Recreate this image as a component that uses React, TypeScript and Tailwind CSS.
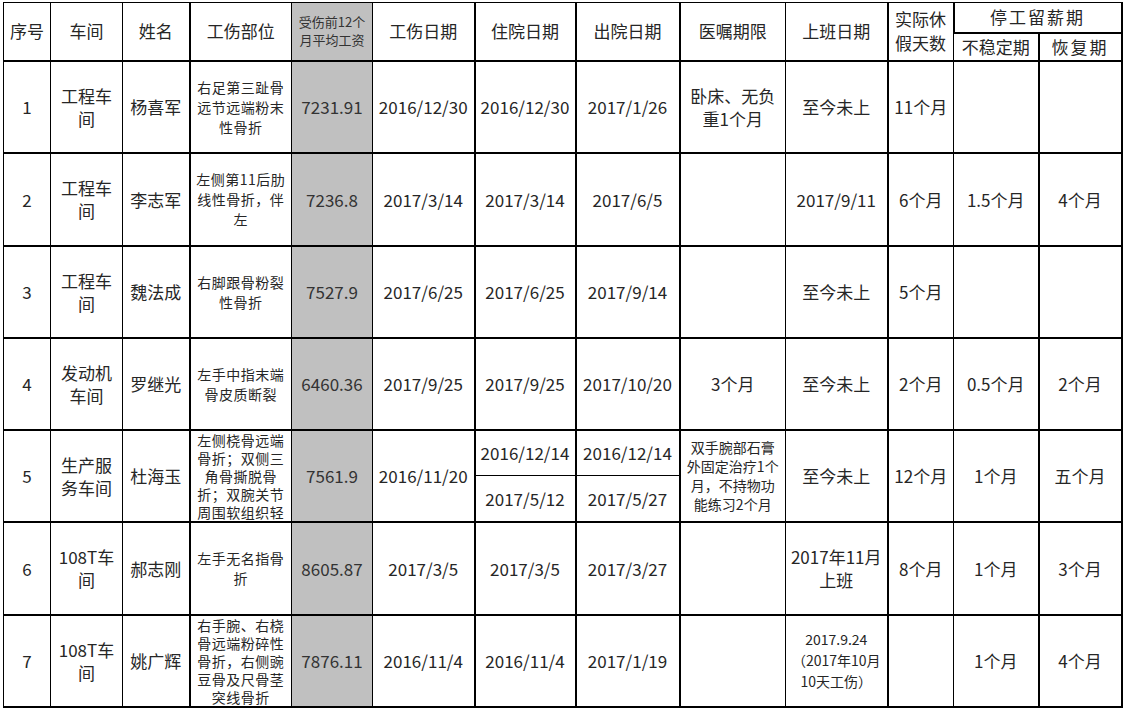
import React from 'react';

type Rec = {
  no: string;
  ws: string[];
  name: string;
  part: string[];
  wage: string;
  inj: string;
  adm: string[];
  dis: string[];
  order: string[];
  orderSmall?: boolean;
  back: string[];
  backSmall?: boolean;
  rest: string;
  unstable: string;
  recover: string;
  h: string;
};

const recs: Rec[] = [
  {
    no: '1', ws: ['工程车', '间'], name: '杨喜军', part: ['右足第三趾骨', '远节远端粉末', '性骨折'],
    wage: '7231.91', inj: '2016/12/30', adm: ['2016/12/30'], dis: ['2017/1/26'],
    order: ['卧床、无负', '重1个月'], back: ['至今未上'], rest: '11个月', unstable: '', recover: '', h: 'h-[92px]',
  },
  {
    no: '2', ws: ['工程车', '间'], name: '李志军', part: ['左侧第11后肋', '线性骨折，伴', '左'],
    wage: '7236.8', inj: '2017/3/14', adm: ['2017/3/14'], dis: ['2017/6/5'],
    order: [], back: ['2017/9/11'], rest: '6个月', unstable: '1.5个月', recover: '4个月', h: 'h-[93px]',
  },
  {
    no: '3', ws: ['工程车', '间'], name: '魏法成', part: ['右脚跟骨粉裂', '性骨折'],
    wage: '7527.9', inj: '2017/6/25', adm: ['2017/6/25'], dis: ['2017/9/14'],
    order: [], back: ['至今未上'], rest: '5个月', unstable: '', recover: '', h: 'h-[92px]',
  },
  {
    no: '4', ws: ['发动机', '车间'], name: '罗继光', part: ['左手中指末端', '骨皮质断裂'],
    wage: '6460.36', inj: '2017/9/25', adm: ['2017/9/25'], dis: ['2017/10/20'],
    order: ['3个月'], back: ['至今未上'], rest: '2个月', unstable: '0.5个月', recover: '2个月', h: 'h-[92px]',
  },
  {
    no: '5', ws: ['生产服', '务车间'], name: '杜海玉',
    part: ['左侧桡骨远端', '骨折；双侧三', '角骨撕脱骨', '折；双腕关节', '周围软组织轻'],
    wage: '7561.9', inj: '2016/11/20', adm: ['2016/12/14', '2017/5/12'], dis: ['2016/12/14', '2017/5/27'],
    order: ['双手腕部石膏', '外固定治疗1个', '月，不持物功', '能练习2个月'], orderSmall: true,
    back: ['至今未上'], rest: '12个月', unstable: '1个月', recover: '五个月', h: 'h-[46px]',
  },
  {
    no: '6', ws: ['108T车', '间'], name: '郝志刚', part: ['左手无名指骨', '折'],
    wage: '8605.87', inj: '2017/3/5', adm: ['2017/3/5'], dis: ['2017/3/27'],
    order: [], back: ['2017年11月', '上班'], rest: '8个月', unstable: '1个月', recover: '3个月', h: 'h-[93px]',
  },
  {
    no: '7', ws: ['108T车', '间'], name: '姚广辉',
    part: ['右手腕、右桡', '骨远端粉碎性', '骨折，右侧豌', '豆骨及尺骨茎', '突线骨折'],
    wage: '7876.11', inj: '2016/11/4', adm: ['2016/11/4'], dis: ['2017/1/19'],
    order: [], back: ['2017.9.24', '（2017年10月', '10天工伤）'], backSmall: true,
    rest: '', unstable: '1个月', recover: '4个月', h: 'h-[92px]',
  },
];

// border per column, matching the thin / thick rules of the sheet
const col = [
  'border border-black',
  'border border-black',
  'border border-black',
  'border border-black border-l-2',
  'border border-black bg-[#c0c0c0]',
  'border border-black',
  'border border-black border-l-2',
  'border border-black border-l-2',
  'border border-black border-l-2',
  'border border-black',
  'border border-black border-l-2',
  'border border-black',
  'border border-black border-l-2 border-r-2',
];

function Lines({ lines }: { lines: string[] }) {
  return (
    <>
      {lines.map((l) => (
        <div key={l} className="whitespace-nowrap">
          {l}
        </div>
      ))}
    </>
  );
}

function Record({ r, last }: { r: Rec; last: boolean }) {
  const split = r.adm.length > 1;
  const rs = split ? 2 : 1;
  const top = `border-t-2 p-0 align-middle ${last ? 'border-b-2' : ''}`;
  const big = 'text-[17px] leading-[23px]';
  const partLead = r.part.length > 3 ? 'text-[14px] leading-[18px]' : 'text-[14px] leading-[20px]';
  return (
    <>
      <tr className={r.h}>
        <td rowSpan={rs} className={`${col[0]} ${top} ${big}`}>{r.no}</td>
        <td rowSpan={rs} className={`${col[1]} ${top} ${big}`}><Lines lines={r.ws} /></td>
        <td rowSpan={rs} className={`${col[2]} ${top} ${big}`}>{r.name}</td>
        <td rowSpan={rs} className={`${col[3]} ${top} ${partLead} tracking-[0.5px]`}>
          <Lines lines={r.part} />
        </td>
        <td rowSpan={rs} className={`${col[4]} ${top} ${big} text-[#333]`}>{r.wage}</td>
        <td rowSpan={rs} className={`${col[5]} ${top} ${big}`}>{r.inj}</td>
        <td className={`${col[6]} ${top} ${big}`}>{r.adm[0]}</td>
        <td className={`${col[7]} ${top} ${big}`}>{r.dis[0]}</td>
        <td rowSpan={rs} className={`${col[8]} ${top} ${r.orderSmall ? 'text-[14px] leading-[19px]' : big}`}>
          <Lines lines={r.order} />
        </td>
        <td rowSpan={rs} className={`${col[9]} ${top} ${r.backSmall ? 'text-[14px] leading-[21px]' : big}`}>
          <Lines lines={r.back} />
        </td>
        <td rowSpan={rs} className={`${col[10]} ${top} ${big}`}>{r.rest}</td>
        <td rowSpan={rs} className={`${col[11]} ${top} ${big}`}>{r.unstable}</td>
        <td rowSpan={rs} className={`${col[12]} ${top} ${big}`}>{r.recover}</td>
      </tr>
      {split && (
        <tr className="h-[46px]">
          <td className={`${col[6]} p-0 align-middle ${big}`}>{r.adm[1]}</td>
          <td className={`${col[7]} p-0 align-middle ${big}`}>{r.dis[1]}</td>
        </tr>
      )}
    </>
  );
}

export default function App() {
  const th = 'p-0 align-middle font-normal text-[17px] leading-[26px]';
  return (
    <div className="min-h-screen bg-white pl-[3px] pt-[2px] font-['Noto_Sans_CJK_SC',sans-serif] text-[#262626]">
      <table className="w-[1118px] table-fixed border-collapse text-center">
        <colgroup>
          <col className="w-[47px]" />
          <col className="w-[72px]" />
          <col className="w-[67px]" />
          <col className="w-[102px]" />
          <col className="w-[81px]" />
          <col className="w-[102px]" />
          <col className="w-[101px]" />
          <col className="w-[104px]" />
          <col className="w-[106px]" />
          <col className="w-[102px]" />
          <col className="w-[66px]" />
          <col className="w-[85px]" />
          <col className="w-[83px]" />
        </colgroup>
        <thead>
          <tr className="h-[30px]">
            <th rowSpan={2} className={`${col[0]} ${th}`}>序号</th>
            <th rowSpan={2} className={`${col[1]} ${th}`}>车间</th>
            <th rowSpan={2} className={`${col[2]} ${th}`}>姓名</th>
            <th rowSpan={2} className={`${col[3]} ${th}`}>工伤部位</th>
            <th rowSpan={2} className={`${col[4]} p-0 align-middle font-normal text-[13px] leading-[18px] text-[#333]`}>
              受伤前12个
              <br />
              月平均工资
            </th>
            <th rowSpan={2} className={`${col[5]} ${th}`}>工伤日期</th>
            <th rowSpan={2} className={`${col[6]} ${th}`}>住院日期</th>
            <th rowSpan={2} className={`${col[7]} ${th}`}>出院日期</th>
            <th rowSpan={2} className={`${col[8]} ${th}`}>医嘱期限</th>
            <th rowSpan={2} className={`${col[9]} ${th}`}>上班日期</th>
            <th rowSpan={2} className={`${col[10]} p-0 align-middle font-normal text-[17px] leading-[24px]`}>
              实际休
              <br />
              假天数
            </th>
            <th colSpan={2} className={`${col[12]} ${th} tracking-[2px]`}>停工留薪期</th>
          </tr>
          <tr className="h-[28px]">
            <th className={`${col[11]} border-t-2 ${th}`}>不稳定期</th>
            <th className={`${col[12]} border-t-2 ${th} tracking-[2px]`}>恢复期</th>
          </tr>
        </thead>
        <tbody>
          {recs.map((r, i) => (
            <Record key={r.no} r={r} last={i === recs.length - 1} />
          ))}
        </tbody>
      </table>
    </div>
  );
}
